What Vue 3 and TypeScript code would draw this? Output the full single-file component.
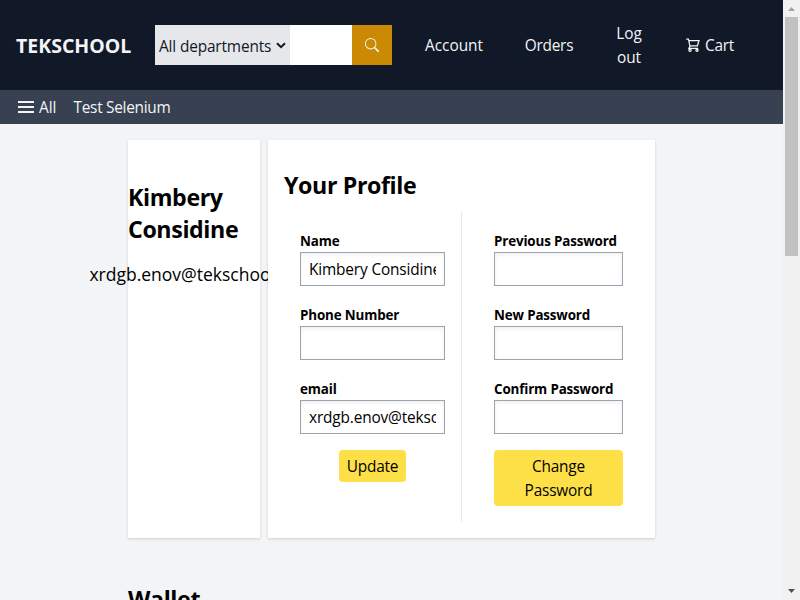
<script setup lang="ts">
import { ref } from 'vue'

interface Field {
  label: string
  value: string
  type: string
}

const user = { name: 'Kimbery Considine', email: 'xrdgb.enov@tekschool.us' }

const profileFields = ref<Field[]>([
  { label: 'Name', value: user.name, type: 'text' },
  { label: 'Phone Number', value: '', type: 'text' },
  { label: 'email', value: user.email, type: 'text' },
])

const passwordFields = ref<Field[]>([
  { label: 'Previous Password', value: '', type: 'password' },
  { label: 'New Password', value: '', type: 'password' },
  { label: 'Confirm Password', value: '', type: 'password' },
])

const search = ref('')
</script>

<template>
  <div class="window">
    <div class="page">
      <header class="topbar">
        <a class="logo">TEKSCHOOL</a>
        <div class="search">
          <button class="departments" type="button">
            <span>All departments</span>
            <svg class="chevron" viewBox="0 0 10 7" width="10" height="7">
              <path d="M1 1.2 5 5.2 9 1.2" fill="none" stroke="#111827" stroke-width="2" />
            </svg>
          </button>
          <input v-model="search" class="search-input" type="text" />
          <button class="search-button" type="button">
            <svg viewBox="0 0 16 16" width="14" height="14" fill="#f3f4f6">
              <path d="M11.742 10.344a6.5 6.5 0 1 0-1.397 1.398h-.001c.03.04.062.078.098.115l3.85 3.85a1 1 0 0 0 1.415-1.414l-3.85-3.85a1.007 1.007 0 0 0-.115-.1zM12 6.5a5.5 5.5 0 1 1-11 0 5.5 5.5 0 0 1 11 0z" />
            </svg>
          </button>
        </div>
        <nav class="links">
          <a class="link account">Account</a>
          <a class="link orders">Orders</a>
          <a class="link logout">Log out</a>
          <a class="link cart">
            <svg viewBox="0 0 14 14" width="14" height="14" fill="none" stroke="#f3f4f6" stroke-width="1.25">
              <path d="M.2 1H2.4L4 8.3 2.9 10.4H12.2M2.7 2.5H13L11.4 7.9H4" />
              <circle cx="4" cy="12.2" r="1.1" />
              <circle cx="11" cy="12.2" r="1.1" />
            </svg>
            <span>Cart</span>
          </a>
        </nav>
      </header>

      <div class="subbar">
        <a class="all">
          <span class="burger"><i></i><i></i><i></i></span>
          <span class="sublink">All</span>
        </a>
        <a class="sublink tight">Test Selenium</a>
      </div>

      <main class="content">
        <div class="cards">
          <section class="card person">
            <h1 class="title">{{ user.name }}</h1>
            <p class="person-email">{{ user.email }}</p>
          </section>

          <section class="card profile">
            <h1 class="title">Your Profile</h1>
            <div class="forms">
              <form class="form details" @submit.prevent>
                <label v-for="field in profileFields" :key="field.label" class="field">
                  <span class="label">{{ field.label }}</span>
                  <input v-model="field.value" class="input" :type="field.type" />
                </label>
                <button class="action" type="submit">Update</button>
              </form>
              <form class="form passwords" @submit.prevent>
                <label v-for="field in passwordFields" :key="field.label" class="field">
                  <span class="label">{{ field.label }}</span>
                  <input v-model="field.value" class="input" :type="field.type" />
                </label>
                <button class="action wide" type="submit">Change Password</button>
              </form>
            </div>
          </section>
        </div>

        <h1 class="title wallet">Wallet</h1>
      </main>
    </div>

    <div class="scrollbar">
      <svg class="arrow" viewBox="0 0 7 4" width="7" height="4">
        <path d="M0 4 3.5 0 7 4Z" fill="#a3a3a3" />
      </svg>
      <div class="thumb"></div>
      <svg class="arrow" viewBox="0 0 7 4" width="7" height="4">
        <path d="M0 0 3.5 4 7 0Z" fill="#505050" />
      </svg>
    </div>
  </div>
</template>

<style>
html,
body {
  margin: 0;
  overflow: hidden;
}
</style>

<style scoped>
* {
  box-sizing: border-box;
}

.window {
  display: flex;
  width: 800px;
  height: 600px;
  overflow: hidden;
  font-family: 'Segoe UI', 'Open Sans', 'Noto Sans', sans-serif;
  font-size: 15.4px;
  line-height: 24px;
  color: #000;
}

button,
input {
  margin: 0;
  padding: 0;
  border: 0;
  font: inherit;
  color: inherit;
  outline: none;
}

.page {
  width: 783px;
  height: 600px;
  overflow: hidden;
  background: #f3f4f6;
}

.topbar {
  display: flex;
  align-items: center;
  height: 90px;
  padding-left: 16px;
  background: #111827;
  color: #f3f4f6;
}

.logo {
  width: 139px;
  padding-top: 2px;
  font-size: 19.5px;
  font-weight: 700;
  line-height: 28px;
}

.search {
  display: flex;
  width: 237px;
  height: 40px;
}

.departments {
  display: flex;
  align-items: center;
  justify-content: space-between;
  width: 135px;
  padding: 3px 4px 0;
  background: #e5e7eb;
  color: #111827;
  letter-spacing: -0.15px;
  white-space: nowrap;
}

.chevron {
  margin-bottom: 3px;
}

.search-input {
  width: 62px;
  background: #fff;
  color: #111827;
}

.search-button {
  display: flex;
  align-items: center;
  justify-content: center;
  width: 40px;
  background: #ca8a04;
}

.links {
  display: flex;
  align-items: center;
  padding-top: 2px;
}

.link {
  text-align: center;
}

.account {
  width: 124px;
}

.orders {
  width: 66px;
  letter-spacing: -0.25px;
}

.logout {
  width: 30px;
  margin-left: 32px;
}

.cart {
  display: flex;
  align-items: center;
  gap: 5px;
  margin-left: 42px;
  letter-spacing: -0.25px;
}

.cart svg {
  margin-bottom: 2px;
}

.subbar {
  display: flex;
  align-items: center;
  gap: 17px;
  height: 34px;
  padding-left: 18px;
  background: #374151;
  color: #f3f4f6;
}

.all {
  display: flex;
  align-items: center;
  gap: 5px;
}

.sublink {
  padding-top: 1px;
}

.tight {
  letter-spacing: -0.28px;
}

.burger {
  display: flex;
  flex-direction: column;
  gap: 3px;
  width: 16px;
}

.burger i {
  height: 2px;
  background: #f3f4f6;
}

.content {
  padding: 16px 128px 0;
}

.cards {
  display: flex;
  gap: 8px;
}

.card {
  height: 398px;
  background: #fff;
  box-shadow: 0 1px 3px rgba(0, 0, 0, 0.1), 0 1px 2px rgba(0, 0, 0, 0.06);
}

.title {
  margin: 0;
  font-size: 23.2px;
  font-weight: 700;
  line-height: 32px;
  letter-spacing: -0.38px;
}

.person {
  display: flex;
  flex-direction: column;
  align-items: center;
  width: 132px;
  padding-top: 41px;
}

.person .title {
  width: 132px;
}

.person-email {
  margin: 15px 0 0;
  font-size: 17.5px;
  font-weight: 500;
  line-height: 28px;
}

.profile {
  position: relative;
  width: 387px;
  padding: 29px 16px 16px;
}

.forms {
  display: flex;
  height: 310px;
  margin-top: 11px;
}

.form {
  display: flex;
  flex-direction: column;
  align-items: center;
  padding: 16px;
}

.details {
  width: 178px;
  border-right: 1px solid #e5e7eb;
}

.passwords {
  width: 177px;
  padding-left: 32px;
}

.field {
  display: flex;
  flex-direction: column;
  width: 100%;
  height: 58px;
  margin-bottom: 16px;
}

.label {
  height: 24px;
  padding-top: 1px;
  font-size: 13.4px;
  font-weight: 700;
  line-height: 24px;
  letter-spacing: -0.15px;
  white-space: nowrap;
}

.input {
  width: 100%;
  height: 34px;
  padding: 0 8px;
  border: 1px solid #9ca3af;
  background: #fff;
  box-shadow: inset 0 2px 4px rgba(0, 0, 0, 0.06);
  letter-spacing: -0.15px;
}

.action {
  width: 67px;
  height: 32px;
  padding: 5px 7px 3px;
  border-radius: 4px;
  background: #fde047;
  letter-spacing: -0.2px;
}

.action.wide {
  width: 100%;
  height: 56px;
}

.wallet {
  margin-top: 45px;
}

.scrollbar {
  display: flex;
  flex-direction: column;
  align-items: center;
  width: 17px;
  height: 600px;
  padding: 7px 0;
  background: #f1f1f1;
}

.thumb {
  width: 13px;
  height: 239px;
  margin: 6px 0 auto;
  background: #c1c1c1;
}
</style>
